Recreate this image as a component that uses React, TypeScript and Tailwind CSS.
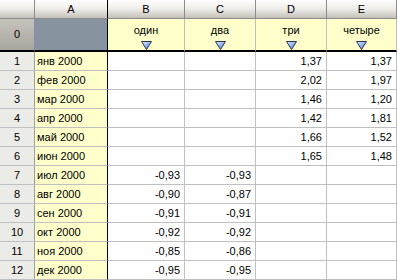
type Row = {
  n: number;
  date: string;
  b: string;
  c: string;
  d: string;
  e: string;
};

const rows: Row[] = [
  { n: 1, date: "янв 2000", b: "", c: "", d: "1,37", e: "1,37" },
  { n: 2, date: "фев 2000", b: "", c: "", d: "2,02", e: "1,97" },
  { n: 3, date: "мар 2000", b: "", c: "", d: "1,46", e: "1,20" },
  { n: 4, date: "апр 2000", b: "", c: "", d: "1,42", e: "1,81" },
  { n: 5, date: "май 2000", b: "", c: "", d: "1,66", e: "1,52" },
  { n: 6, date: "июн 2000", b: "", c: "", d: "1,65", e: "1,48" },
  { n: 7, date: "июл 2000", b: "-0,93", c: "-0,93", d: "", e: "" },
  { n: 8, date: "авг 2000", b: "-0,90", c: "-0,87", d: "", e: "" },
  { n: 9, date: "сен 2000", b: "-0,91", c: "-0,91", d: "", e: "" },
  { n: 10, date: "окт 2000", b: "-0,92", c: "-0,92", d: "", e: "" },
  { n: 11, date: "ноя 2000", b: "-0,85", c: "-0,86", d: "", e: "" },
  { n: 12, date: "дек 2000", b: "-0,95", c: "-0,95", d: "", e: "" },
];

const letters = ["B", "C", "D", "E"];
const names = ["один", "два", "три", "четыре"];

function Arrow() {
  return (
    <svg width="11" height="9" viewBox="0 0 11 9" className="block">
      <defs>
        <linearGradient id="tri" x1="0" y1="0" x2="1" y2="1">
          <stop offset="0" stopColor="#e6f0ff" />
          <stop offset="0.5" stopColor="#8fb4f0" />
          <stop offset="1" stopColor="#3a6cc8" />
        </linearGradient>
      </defs>
      <path d="M0.5 0.5 L10.5 0.5 L5.5 8.5 Z" fill="url(#tri)" stroke="#2a3450" strokeWidth="1" strokeLinejoin="round" />
    </svg>
  );
}

export default function App() {
  const cols = "grid grid-cols-[35px_73px_77px_71px_71px_70px]";
  const hdr =
    "h-[19px] border-r border-b border-r-[#8c8c8c] border-b-[#8c8c8c] bg-gradient-to-b from-[#fefefe] via-[#eeece8] to-[#c4c1ba] flex items-center justify-center";
  const num = "h-[19px] border-r border-b border-[#c0c0c0] flex items-center justify-end pr-[4px]";

  return (
    <div className="w-[398px] h-[280px] overflow-hidden bg-white text-[11px] leading-none text-black font-['Liberation_Sans',Arial,sans-serif]">
      <div className={cols}>
        <div className={hdr}></div>
        <div className={hdr + " border-r-black"}>A</div>
        {letters.map((l) => (
          <div key={l} className={hdr}>
            {l}
          </div>
        ))}

        <div className="h-[33px] border-r border-b-2 border-r-[#8a8fa8] border-b-black bg-gradient-to-b from-[#c6c3bc] to-[#a9a69f] flex items-center justify-center">
          0
        </div>
        <div className="h-[33px] border-r border-b-2 border-r-black border-b-black bg-[#8794a0]"></div>
        {names.map((t) => (
          <div
            key={t}
            className="h-[33px] border-r border-b-2 border-r-[#c0c0c0] border-b-black bg-[#ffffcc] flex flex-col items-center pt-[6px] gap-[5px]"
          >
            <span>{t}</span>
            <Arrow />
          </div>
        ))}

        {rows.map((r) => (
          <div key={r.n} className="contents">
            <div className="h-[19px] border-r border-b border-r-[#a0a0a0] border-b-[#c0c0c0] bg-[#ebebe8] flex items-center justify-center">
              {r.n}
            </div>
            <div className="h-[19px] border-r border-b border-r-black border-b-[#c0c0c0] bg-[#ffffcc] flex items-center pl-[2px]">
              {r.date}
            </div>
            <div className={num}>{r.b}</div>
            <div className={num}>{r.c}</div>
            <div className={num}>{r.d}</div>
            <div className={num}>{r.e}</div>
          </div>
        ))}
      </div>
    </div>
  );
}
